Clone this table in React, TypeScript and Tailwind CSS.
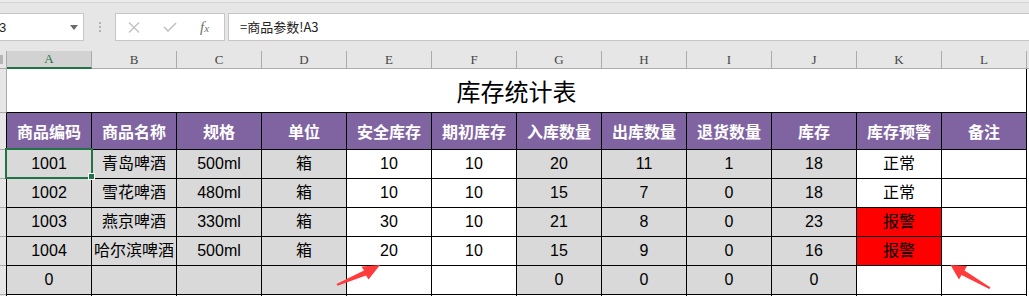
const cols = ['A', 'B', 'C', 'D', 'E', 'F', 'G', 'H', 'I', 'J', 'K', 'L'];
const headers = ['商品编码', '商品名称', '规格', '单位', '安全库存', '期初库存', '入库数量', '出库数量', '退货数量', '库存', '库存预警', '备注'];
const gray = [0, 1, 2, 3, 6, 7, 8, 9];
const rows: string[][] = [
  ['1001', '青岛啤酒', '500ml', '箱', '10', '10', '20', '11', '1', '18', '正常', ''],
  ['1002', '雪花啤酒', '480ml', '箱', '10', '10', '15', '7', '0', '18', '正常', ''],
  ['1003', '燕京啤酒', '330ml', '箱', '30', '10', '21', '8', '0', '23', '报警', ''],
  ['1004', '哈尔滨啤酒', '500ml', '箱', '20', '10', '15', '9', '0', '16', '报警', ''],
  ['0', '', '', '', '', '', '0', '0', '0', '0', '', ''],
  ['', '', '', '', '', '', '', '', '', '', '', ''],
];

function cellBg(i: number, v: string, ri: number) {
  if (ri === 5) return 'bg-white';
  if (i === 10 && v === '报警') return 'bg-[#ff0000]';
  return gray.includes(i) ? 'bg-[#d9d9d9]' : 'bg-white';
}

export default function App() {
  return (
    <div className="relative w-[1029px] h-[296px] overflow-hidden bg-white text-black font-['Liberation_Sans','Noto_Sans_CJK_SC',sans-serif]">
      {/* formula bar area */}
      <div className="h-[51px] bg-[#e6e6e6] flex flex-col">
        <div className="h-[2px] bg-[#ebebeb]" />
        <div className="h-px bg-[#d5d5d5]" />
        <div className="h-[10px]" />
        <div className="flex h-[28px]">
          <div className="w-[84px] bg-white border-y border-r border-[#c6c6c6] flex items-center justify-between pr-[5px]">
            <span className="text-[13px] text-[#222] -ml-[1px] leading-none">3</span>
            <svg width="8" height="5" viewBox="0 0 8 5">
              <polygon points="0,0 8,0 4,5" fill="#6a6a6a" />
            </svg>
          </div>
          <div className="w-[31px] flex flex-col items-center justify-center gap-[2px]">
            <div className="w-[2px] h-[2px] bg-[#b3b3b3]" />
            <div className="w-[2px] h-[2px] bg-[#b3b3b3]" />
            <div className="w-[2px] h-[2px] bg-[#b3b3b3]" />
          </div>
          <div className="w-[110px] bg-white border border-[#c6c6c6] flex items-center">
            <svg className="ml-[12px]" width="12" height="11" viewBox="0 0 12 11">
              <path d="M1 0.5 L11 10.5 M11 0.5 L1 10.5" stroke="#c2c2c2" strokeWidth="1.4" fill="none" />
            </svg>
            <svg className="ml-[23px]" width="14" height="10" viewBox="0 0 14 10">
              <path d="M1 5 L5 9 L13 1" stroke="#c2c2c2" strokeWidth="1.6" fill="none" />
            </svg>
            <span className="ml-[23px] font-['Liberation_Serif',serif] italic text-[#6f6f6f] leading-none">
              <span className="text-[15px]">f</span>
              <span className="text-[11px]">x</span>
            </span>
          </div>
          <div className="w-[3px]" />
          <div className="flex-1 bg-white border-y border-l border-[#c6c6c6] flex items-center pl-[11px] text-[13px] text-[#222] font-['Noto_Sans_CJK_SC',sans-serif]">
            =商品参数!A3
          </div>
        </div>
        <div className="flex-1" />
      </div>

      {/* column headers */}
      <div className="flex h-[18px] bg-[#e6e6e6] font-['Liberation_Serif',serif] text-[13px] text-[#444]">
        <div className="w-[7px] border-r border-b border-[#ababab] flex items-center">
          <div className="w-[3px] h-[9px] bg-[#b5b5b5]" />
        </div>
        {cols.map((c, i) => (
          <div
            key={c}
            className={
              i === 0
                ? 'w-[85px] flex items-center justify-center border-r border-[#ababab] bg-[#d2d2d2] border-b-2 border-b-[#217346] text-[#217346]'
                : 'w-[85px] flex items-center justify-center border-r border-b border-[#ababab]'
            }
          >
            {c}
          </div>
        ))}
        <div className="flex-1 border-b border-[#ababab]" />
      </div>

      {/* title row */}
      <div className="flex h-[44px]">
        <div className="w-[6px] bg-[#e6e6e6] border-b border-[#ababab]" />
        <div className="w-[1021px] border-l border-l-[#ababab] border-r border-b border-black flex items-center justify-center text-[24px] font-['Noto_Sans_CJK_SC',sans-serif]">
          库存统计表
        </div>
      </div>

      {/* header row */}
      <div className="flex h-[37px]">
        <div className="w-[6px] bg-[#e6e6e6] border-b border-[#ababab]" />
        {headers.map((h, i) => (
          <div
            key={h}
            className={`${i === 0 ? 'w-[86px] border-l' : 'w-[85px]'} bg-[#8064a2] border-r border-b border-black text-white font-bold text-[16px] flex items-center justify-center whitespace-nowrap font-['Noto_Sans_CJK_SC',sans-serif]`}
          >
            {h}
          </div>
        ))}
      </div>

      {/* data rows */}
      {rows.map((r, ri) => (
        <div key={ri} className="flex h-[29px]">
          <div className="w-[6px] bg-[#e6e6e6] border-b border-[#ababab]" />
          {r.map((v, i) => (
            <div
              key={i}
              className={`${i === 0 ? 'w-[86px] border-l' : 'w-[85px]'} ${cellBg(i, v, ri)} border-r border-b border-black text-[16px] flex items-center justify-center whitespace-nowrap`}
            >
              {v}
            </div>
          ))}
        </div>
      ))}

      {/* selected cell */}
      <div className="absolute left-[5px] top-[148px] w-[88px] h-[31px] border-2 border-[#217346] pointer-events-none" />
      <div className="absolute left-[88px] top-[173px] w-[7px] h-[7px] bg-[#217346] border border-white pointer-events-none" />

      {/* annotation arrows */}
      <svg className="absolute left-0 top-0 pointer-events-none" width="1029" height="296" viewBox="0 0 1029 296">
        <polygon
          points="380,265 361.5,266.5 364,270.5 336.5,284 337.5,285.8 366,275.5 368.5,279.5"
          fill="#ff3b3b"
        />
        <polygon
          points="950.5,265 967,266 964.5,270.5 990.5,287.6 989.3,289 961.5,275 959,279.5"
          fill="#ff3b3b"
        />
      </svg>
    </div>
  );
}
